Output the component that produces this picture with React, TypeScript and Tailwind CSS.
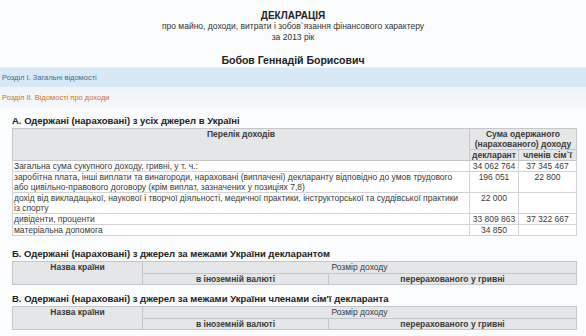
const rows = [
  { label: "Загальна сума сукупного доходу, гривні, у т. ч.:", a: "34 062 764", b: "37 345 467" },
  {
    label:
      "заробітна плата, інші виплати та винагороди, нараховані (виплачені) декларанту відповідно до умов трудового або цивільно-правового договору (крім виплат, зазначених у позиціях 7,8)",
    a: "196 051",
    b: "22 800",
  },
  {
    label:
      "дохід від викладацької, наукової і творчої діяльності, медичної практики, інструкторської та суддівської практики із спорту",
    a: "22 000",
    b: "",
  },
  { label: "дивіденти, проценти", a: "33 809 863", b: "37 322 667" },
  { label: "матеріальна допомога", a: "34 850", b: "" },
];

function ForeignTable() {
  return (
    <table className="w-[564px] table-fixed border-collapse text-[8.5px] leading-[10.5px] text-[#3a3a3a]">
      <colgroup>
        <col className="w-[130px]" />
        <col className="w-[186px]" />
        <col className="w-[248px]" />
      </colgroup>
      <tbody>
        <tr>
          <td rowSpan={2} className="border border-[#c4c6c8] bg-[#e4e6e8] text-center align-top font-bold">
            Назва країни
          </td>
          <td colSpan={2} className="border border-[#c4c6c8] bg-[#e4e6e8] text-center">
            Розмір доходу
          </td>
        </tr>
        <tr>
          <td className="border border-[#c4c6c8] bg-[#e4e6e8] text-center font-bold">в іноземній валюті</td>
          <td className="border border-[#c4c6c8] bg-[#e4e6e8] text-center font-bold">перерахованого у гривні</td>
        </tr>
      </tbody>
    </table>
  );
}

export default function App() {
  return (
    <div className="w-[586px] h-[336px] overflow-hidden bg-[#fbfcfd] font-['Liberation_Sans',Arial,sans-serif] text-[#333]">
      <div className="flex flex-col items-center pt-[10px]">
        <div className="text-[10px] leading-[11px] font-bold text-[#222]">ДЕКЛАРАЦІЯ</div>
        <div className="text-[8.5px] leading-[11px]">про майно, доходи, витрати і зобов`язання фінансового характеру</div>
        <div className="text-[8.5px] leading-[11px]">за 2013 рік</div>
        <div className="mt-[11px] text-[10.5px] leading-[13px] font-bold text-[#222]">Бобов Геннадій Борисович</div>
      </div>

      <div className="h-[20px] flex items-center px-[2px] border-t border-[#e8f0f6] bg-[#d9e8f5] text-[7.5px] text-[#3e6d96]">
        Розділ I. Загальні відомості
      </div>
      <div className="h-[21px] flex items-center px-[2px] bg-gradient-to-b from-[#eef3f7] to-[#f7f9fb] text-[7.5px] text-[#cd7330]">
        Розділ II. Відомості про доходи
      </div>

      <div className="pl-[12px]">
        <div className="mt-[7px] text-[9.5px] leading-[11px] font-bold text-[#222]">
          А. Одержані (нараховані) з усіх джерел в Україні
        </div>
        <table className="mt-[2px] w-[564px] table-fixed border-collapse text-[8.5px] leading-[10px] text-[#3a3a3a]">
          <colgroup>
            <col className="w-[457px]" />
            <col className="w-[49px]" />
            <col className="w-[58px]" />
          </colgroup>
          <tbody>
            <tr>
              <td rowSpan={2} className="border border-[#c4c6c8] bg-[#e4e6e8] text-center align-top font-bold">
                Перелік доходів
              </td>
              <td colSpan={2} className="border border-[#c4c6c8] bg-[#e4e6e8] text-center font-bold">
                Сума одержаного
                <br />
                (нарахованого) доходу
              </td>
            </tr>
            <tr>
              <td className="border border-[#c4c6c8] bg-[#e4e6e8] text-center font-bold whitespace-nowrap">декларант</td>
              <td className="border border-[#c4c6c8] bg-[#e4e6e8] text-center font-bold whitespace-nowrap">членів сім`ї</td>
            </tr>
            {rows.map((r) => (
              <tr key={r.label}>
                <td className="border border-[#d2d4d6] bg-white pl-[1px] pr-[4px] align-top">{r.label}</td>
                <td className="border border-[#d2d4d6] bg-white text-center align-top whitespace-nowrap">{r.a}</td>
                <td className="border border-[#d2d4d6] bg-white text-center align-top whitespace-nowrap">{r.b}</td>
              </tr>
            ))}
          </tbody>
        </table>

        <div className="mt-[12px] text-[9.5px] leading-[11px] font-bold text-[#222]">
          Б. Одержані (нараховані) з джерел за межами України декларантом
        </div>
        <div className="mt-[2px]">
          <ForeignTable />
        </div>

        <div className="mt-[8px] text-[9.5px] leading-[11px] font-bold text-[#222]">
          В. Одержані (нараховані) з джерел за межами України членами сім'ї декларанта
        </div>
        <div className="mt-[2px]">
          <ForeignTable />
        </div>
      </div>
    </div>
  );
}
